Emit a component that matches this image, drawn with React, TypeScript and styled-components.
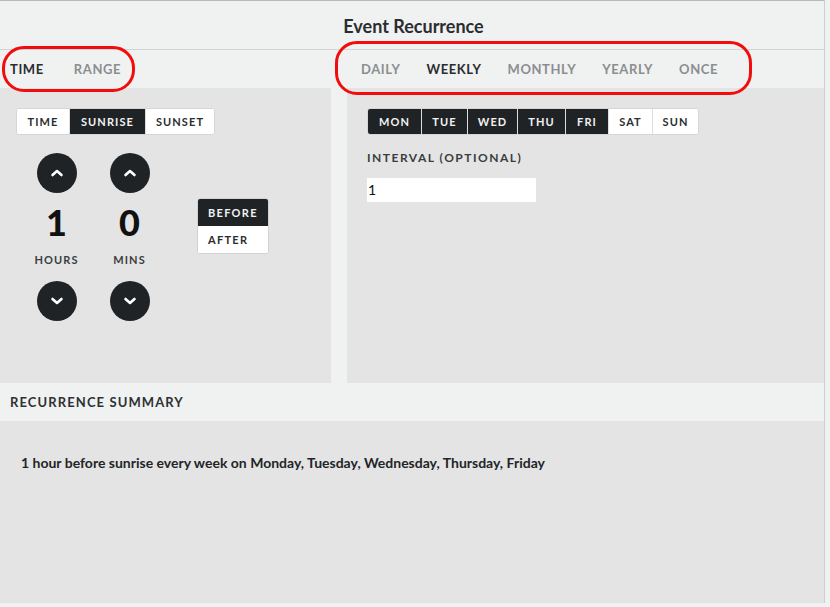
import React from "react";
import styled, { createGlobalStyle } from "styled-components";

const GlobalStyle = createGlobalStyle`
  html, body { margin: 0; padding: 0; background: #f0f1f1; }
  body { font-family: Lato, "Noto Sans", sans-serif; color: #25282b; }
  * { box-sizing: border-box; }
`;

const Frame = styled.div`
  position: relative;
  width: 825px;
  height: 603px;
  background: #f0f1f1;
  border-top: 1px solid #b9b9b9;
  border-right: 1px solid #cfcfcf;
  display: flex;
  flex-direction: column;
`;

const TitleBar = styled.div`
  height: 49px;
  flex-shrink: 0;
  border-bottom: 1px solid #d3d4d4;
  display: flex;
  align-items: center;
  justify-content: center;
  font-size: 18px;
  font-weight: 700;
  color: #2a2d30;
  padding-top: 2px;
  padding-left: 3px;
`;

const TabRow = styled.div`
  height: 38px;
  flex-shrink: 0;
  display: grid;
  grid-template-columns: 331px 16px 1fr;
`;

const TabGroup = styled.div<{ $gap: number; $pad: number }>`
  display: flex;
  align-items: center;
  gap: ${(p) => p.$gap}px;
  padding-left: ${(p) => p.$pad}px;
`;

const Tab = styled.span<{ $active?: boolean }>`
  font-size: 13px;
  font-weight: 700;
  letter-spacing: 0.6px;
  color: ${(p) => (p.$active ? "#2a2d30" : "#8b8e90")};
`;

const Panels = styled.div`
  height: 295px;
  flex-shrink: 0;
  display: grid;
  grid-template-columns: 331px 1fr;
  column-gap: 16px;
`;

const Panel = styled.div<{ $padLeft: number }>`
  background: #e4e4e4;
  padding: 20px 0 0 ${(p) => p.$padLeft}px;
  display: flex;
  flex-direction: column;
  align-items: flex-start;
`;

const Segmented = styled.div`
  display: flex;
  height: 27px;
  border-radius: 3px;
  overflow: hidden;
  border: 1px solid #d6d6d6;
  background: #fff;
`;

const SegButton = styled.div<{ $on?: boolean; $w: number }>`
  width: ${(p) => p.$w}px;
  display: flex;
  align-items: center;
  justify-content: center;
  font-size: 11px;
  font-weight: 700;
  letter-spacing: 1.1px;
  background: ${(p) => (p.$on ? "#202326" : "#ffffff")};
  color: ${(p) => (p.$on ? "#f2f2f2" : "#2a2d30")};
  & + & {
    border-left: 1px solid ${(p) => (p.$on ? "#55585b" : "#dedede")};
  }
`;

const TimeRow = styled.div`
  display: flex;
  align-items: flex-start;
  margin-top: 18px;
  margin-left: 4px;
`;

const Spinner = styled.div`
  width: 73px;
  display: flex;
  flex-direction: column;
  align-items: center;
`;

const RoundButton = styled.div`
  width: 40px;
  height: 40px;
  border-radius: 50%;
  background: #202326;
  display: flex;
  align-items: center;
  justify-content: center;
`;

const BigNumber = styled.div`
  margin-top: 9px;
  height: 40px;
  line-height: 40px;
  font-size: 36px;
  font-weight: 900;
  color: #111;
`;

const UnitLabel = styled.div`
  margin-top: 11px;
  height: 14px;
  line-height: 14px;
  font-size: 11px;
  font-weight: 700;
  letter-spacing: 1.1px;
  color: #3a3d40;
  margin-bottom: 14px;
`;

const StackToggle = styled.div`
  margin-top: 45px;
  margin-left: 31px;
  width: 72px;
  border-radius: 3px;
  overflow: hidden;
  border: 1px solid #d2d2d2;
  background: #fff;
  display: flex;
  flex-direction: column;
`;

const StackItem = styled.div<{ $on?: boolean }>`
  height: 27px;
  display: flex;
  align-items: center;
  padding-left: 10px;
  font-size: 11px;
  font-weight: 700;
  letter-spacing: 1.3px;
  background: ${(p) => (p.$on ? "#202326" : "#ffffff")};
  color: ${(p) => (p.$on ? "#f2f2f2" : "#2a2d30")};
`;

const FieldLabel = styled.div`
  margin-top: 16px;
  font-size: 12px;
  font-weight: 700;
  letter-spacing: 1.5px;
  color: #3a3d40;
  line-height: 14px;
`;

const TextInput = styled.div`
  margin-top: 13px;
  width: 169px;
  height: 24px;
  background: #fff;
  font-size: 14px;
  line-height: 24px;
  padding-left: 1px;
  color: #111;
`;

const SummaryHeader = styled.div`
  height: 38px;
  flex-shrink: 0;
  display: flex;
  align-items: center;
  padding-left: 10px;
  font-size: 13px;
  font-weight: 700;
  letter-spacing: 1.1px;
  color: #2e3134;
`;

const SummaryBody = styled.div`
  flex: 1;
  background: #e4e4e4;
  padding: 33px 0 0 21px;
  font-size: 14px;
  font-weight: 700;
  color: #222528;
`;

const Annotation = styled.div<{ $x: number; $y: number; $w: number; $h: number }>`
  position: absolute;
  left: ${(p) => p.$x}px;
  top: ${(p) => p.$y}px;
  width: ${(p) => p.$w}px;
  height: ${(p) => p.$h}px;
  border: 3px solid #f20d0d;
  border-radius: 22px;
  pointer-events: none;
`;

const Chevron = ({ up }: { up?: boolean }) => (
  <svg width="14" height="10" viewBox="0 0 14 10">
    <path
      d={up ? "M2.5 7 L7 3 L11.5 7" : "M2.5 3 L7 7 L11.5 3"}
      fill="none"
      stroke="#fff"
      strokeWidth="2.6"
      strokeLinecap="round"
      strokeLinejoin="round"
    />
  </svg>
);

const days: [string, boolean, number][] = [
  ["MON", true, 53],
  ["TUE", true, 46],
  ["WED", true, 50],
  ["THU", true, 48],
  ["FRI", true, 43],
  ["SAT", false, 44],
  ["SUN", false, 46],
];

export default function App() {
  return (
    <>
      <GlobalStyle />
      <Frame>
        <TitleBar>Event Recurrence</TitleBar>
        <TabRow>
          <TabGroup $gap={30} $pad={10}>
            <Tab $active>TIME</Tab>
            <Tab>RANGE</Tab>
          </TabGroup>
          <div />
          <TabGroup $gap={26} $pad={14}>
            <Tab>DAILY</Tab>
            <Tab $active>WEEKLY</Tab>
            <Tab>MONTHLY</Tab>
            <Tab>YEARLY</Tab>
            <Tab>ONCE</Tab>
          </TabGroup>
        </TabRow>
        <Panels>
          <Panel $padLeft={16}>
            <Segmented>
              <SegButton $w={52}>TIME</SegButton>
              <SegButton $w={76} $on>SUNRISE</SegButton>
              <SegButton $w={69}>SUNSET</SegButton>
            </Segmented>
            <TimeRow>
              <Spinner>
                <RoundButton><Chevron up /></RoundButton>
                <BigNumber>1</BigNumber>
                <UnitLabel>HOURS</UnitLabel>
                <RoundButton><Chevron /></RoundButton>
              </Spinner>
              <Spinner>
                <RoundButton><Chevron up /></RoundButton>
                <BigNumber>0</BigNumber>
                <UnitLabel>MINS</UnitLabel>
                <RoundButton><Chevron /></RoundButton>
              </Spinner>
              <StackToggle>
                <StackItem $on>BEFORE</StackItem>
                <StackItem>AFTER</StackItem>
              </StackToggle>
            </TimeRow>
          </Panel>
          <Panel $padLeft={20}>
            <Segmented>
              {days.map(([d, on, w]) => (
                <SegButton key={d} $on={on} $w={w}>{d}</SegButton>
              ))}
            </Segmented>
            <FieldLabel>INTERVAL (OPTIONAL)</FieldLabel>
            <TextInput>1</TextInput>
          </Panel>
        </Panels>
        <SummaryHeader>RECURRENCE SUMMARY</SummaryHeader>
        <SummaryBody>
          1 hour before sunrise every week on Monday, Tuesday, Wednesday, Thursday, Friday
        </SummaryBody>
        <Annotation $x={2} $y={45} $w={133} $h={46} />
        <Annotation $x={335} $y={40} $w={417} $h={54} />
      </Frame>
    </>
  );
}
